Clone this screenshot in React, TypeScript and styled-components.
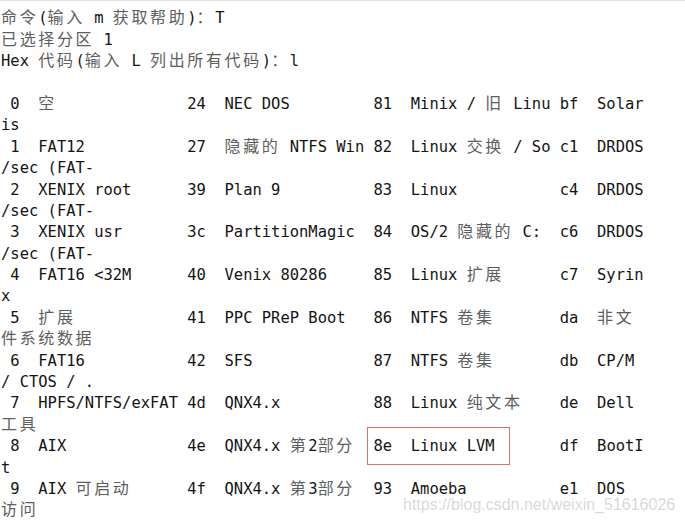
import React from 'react';
import styled, { createGlobalStyle } from 'styled-components';

// terminal grid: 69 columns, CJK glyphs take two cells
const COLS = 69;
const CELL = 9.314;
const MARK = '8e  Linux LVM';

const GlobalStyle = createGlobalStyle`
  html, body {
    margin: 0;
    padding: 0;
    background: #fff;
  }
  body {
    width: 685px;
    height: 523px;
    overflow: hidden;
  }
`;

const Screen = styled.div`
  position: relative;
  height: 523px;
  box-sizing: border-box;
  border-top: 1px solid #e2e2e2;
  padding: 7.4px 0 0 1px;
  background: #fff;
  overflow: hidden;
`;

const Line = styled.div`
  height: 21.4px;
  line-height: 21.4px;
  white-space: pre;
  font-family: 'DejaVu Sans Mono', 'Liberation Mono', monospace;
  font-size: 15.47px;
  color: #141414;
`;

const Wide = styled.span`
  display: inline-block;
  width: ${CELL * 2}px;
  font-family: 'Noto Sans CJK SC', sans-serif;
  font-size: 16px;
  line-height: 1;
  color: #5e5e5e;
`;

const Marked = styled.span`
  position: relative;

  &::after {
    content: '';
    position: absolute;
    left: -6.5px;
    right: -15.5px;
    top: -10px;
    bottom: -10px;
    border: 1.5px solid #e36c6c;
  }
`;

const Watermark = styled.div`
  position: absolute;
  left: 403px;
  top: 495px;
  font-family: 'Liberation Sans', Arial, sans-serif;
  font-size: 16px;
  line-height: 18px;
  color: rgba(185, 185, 185, 0.55);
  white-space: nowrap;
`;

const isWide = (ch: string) => /[\u2E80-\u9FFF\u3000-\u303F\uFF00-\uFF60]/.test(ch);
const cells = (s: string) => [...s].reduce((n, c) => n + (isWide(c) ? 2 : 1), 0);
const padTo = (s: string, n: number) => s + ' '.repeat(Math.max(0, n - cells(s)));

const types: [string, string][][] = [
  [['0', '空'], ['24', 'NEC DOS'], ['81', 'Minix / 旧 Linu'], ['bf', 'Solaris']],
  [['1', 'FAT12'], ['27', '隐藏的 NTFS Win'], ['82', 'Linux 交换 / So'], ['c1', 'DRDOS/sec (FAT-']],
  [['2', 'XENIX root'], ['39', 'Plan 9'], ['83', 'Linux'], ['c4', 'DRDOS/sec (FAT-']],
  [['3', 'XENIX usr'], ['3c', 'PartitionMagic'], ['84', 'OS/2 隐藏的 C:'], ['c6', 'DRDOS/sec (FAT-']],
  [['4', 'FAT16 <32M'], ['40', 'Venix 80286'], ['85', 'Linux 扩展'], ['c7', 'Syrinx']],
  [['5', '扩展'], ['41', 'PPC PReP Boot'], ['86', 'NTFS 卷集'], ['da', '非文件系统数据']],
  [['6', 'FAT16'], ['42', 'SFS'], ['87', 'NTFS 卷集'], ['db', 'CP/M / CTOS / .']],
  [['7', 'HPFS/NTFS/exFAT'], ['4d', 'QNX4.x'], ['88', 'Linux 纯文本'], ['de', 'Dell 工具']],
  [['8', 'AIX'], ['4e', 'QNX4.x 第2部分'], ['8e', 'Linux LVM'], ['df', 'BootIt']],
  [['9', 'AIX 可启动'], ['4f', 'QNX4.x 第3部分'], ['93', 'Amoeba'], ['e1', 'DOS 访问']],
];

const wrap = (s: string) => {
  const out: string[] = [];
  let cur = '';
  let w = 0;
  for (const ch of [...s]) {
    const cw = isWide(ch) ? 2 : 1;
    if (w + cw > COLS) {
      out.push(cur);
      cur = '';
      w = 0;
    }
    cur += ch;
    w += cw;
  }
  out.push(cur);
  return out;
};

const lines: string[] = [
  '命令(输入 m 获取帮助)：T',
  '已选择分区 1',
  'Hex 代码(输入 L 列出所有代码)：l',
  '',
  ...types.flatMap((row) =>
    wrap(
      row
        .map(([code, name]) => code.padStart(2) + '  ' + padTo(name, 15))
        .join(' ')
        .trimEnd()
    )
  ),
];

const renderText = (s: string) => {
  const parts: React.ReactNode[] = [];
  let run = '';
  [...s].forEach((ch, i) => {
    if (isWide(ch)) {
      if (run) parts.push(run);
      run = '';
      parts.push(<Wide key={i}>{ch}</Wide>);
    } else {
      run += ch;
    }
  });
  if (run) parts.push(run);
  return parts;
};

const TermLine = ({ text }: { text: string }) => {
  const at = text.indexOf(MARK);
  if (at < 0) return <Line>{text ? renderText(text) : ' '}</Line>;
  return (
    <Line>
      {renderText(text.slice(0, at))}
      <Marked>{renderText(MARK)}</Marked>
      {renderText(text.slice(at + MARK.length))}
    </Line>
  );
};

export default function App() {
  return (
    <>
      <GlobalStyle />
      <Screen>
        {lines.map((l, i) => (
          <TermLine key={i} text={l} />
        ))}
        <Watermark>https://blog.csdn.net/weixin_51616026</Watermark>
      </Screen>
    </>
  );
}
